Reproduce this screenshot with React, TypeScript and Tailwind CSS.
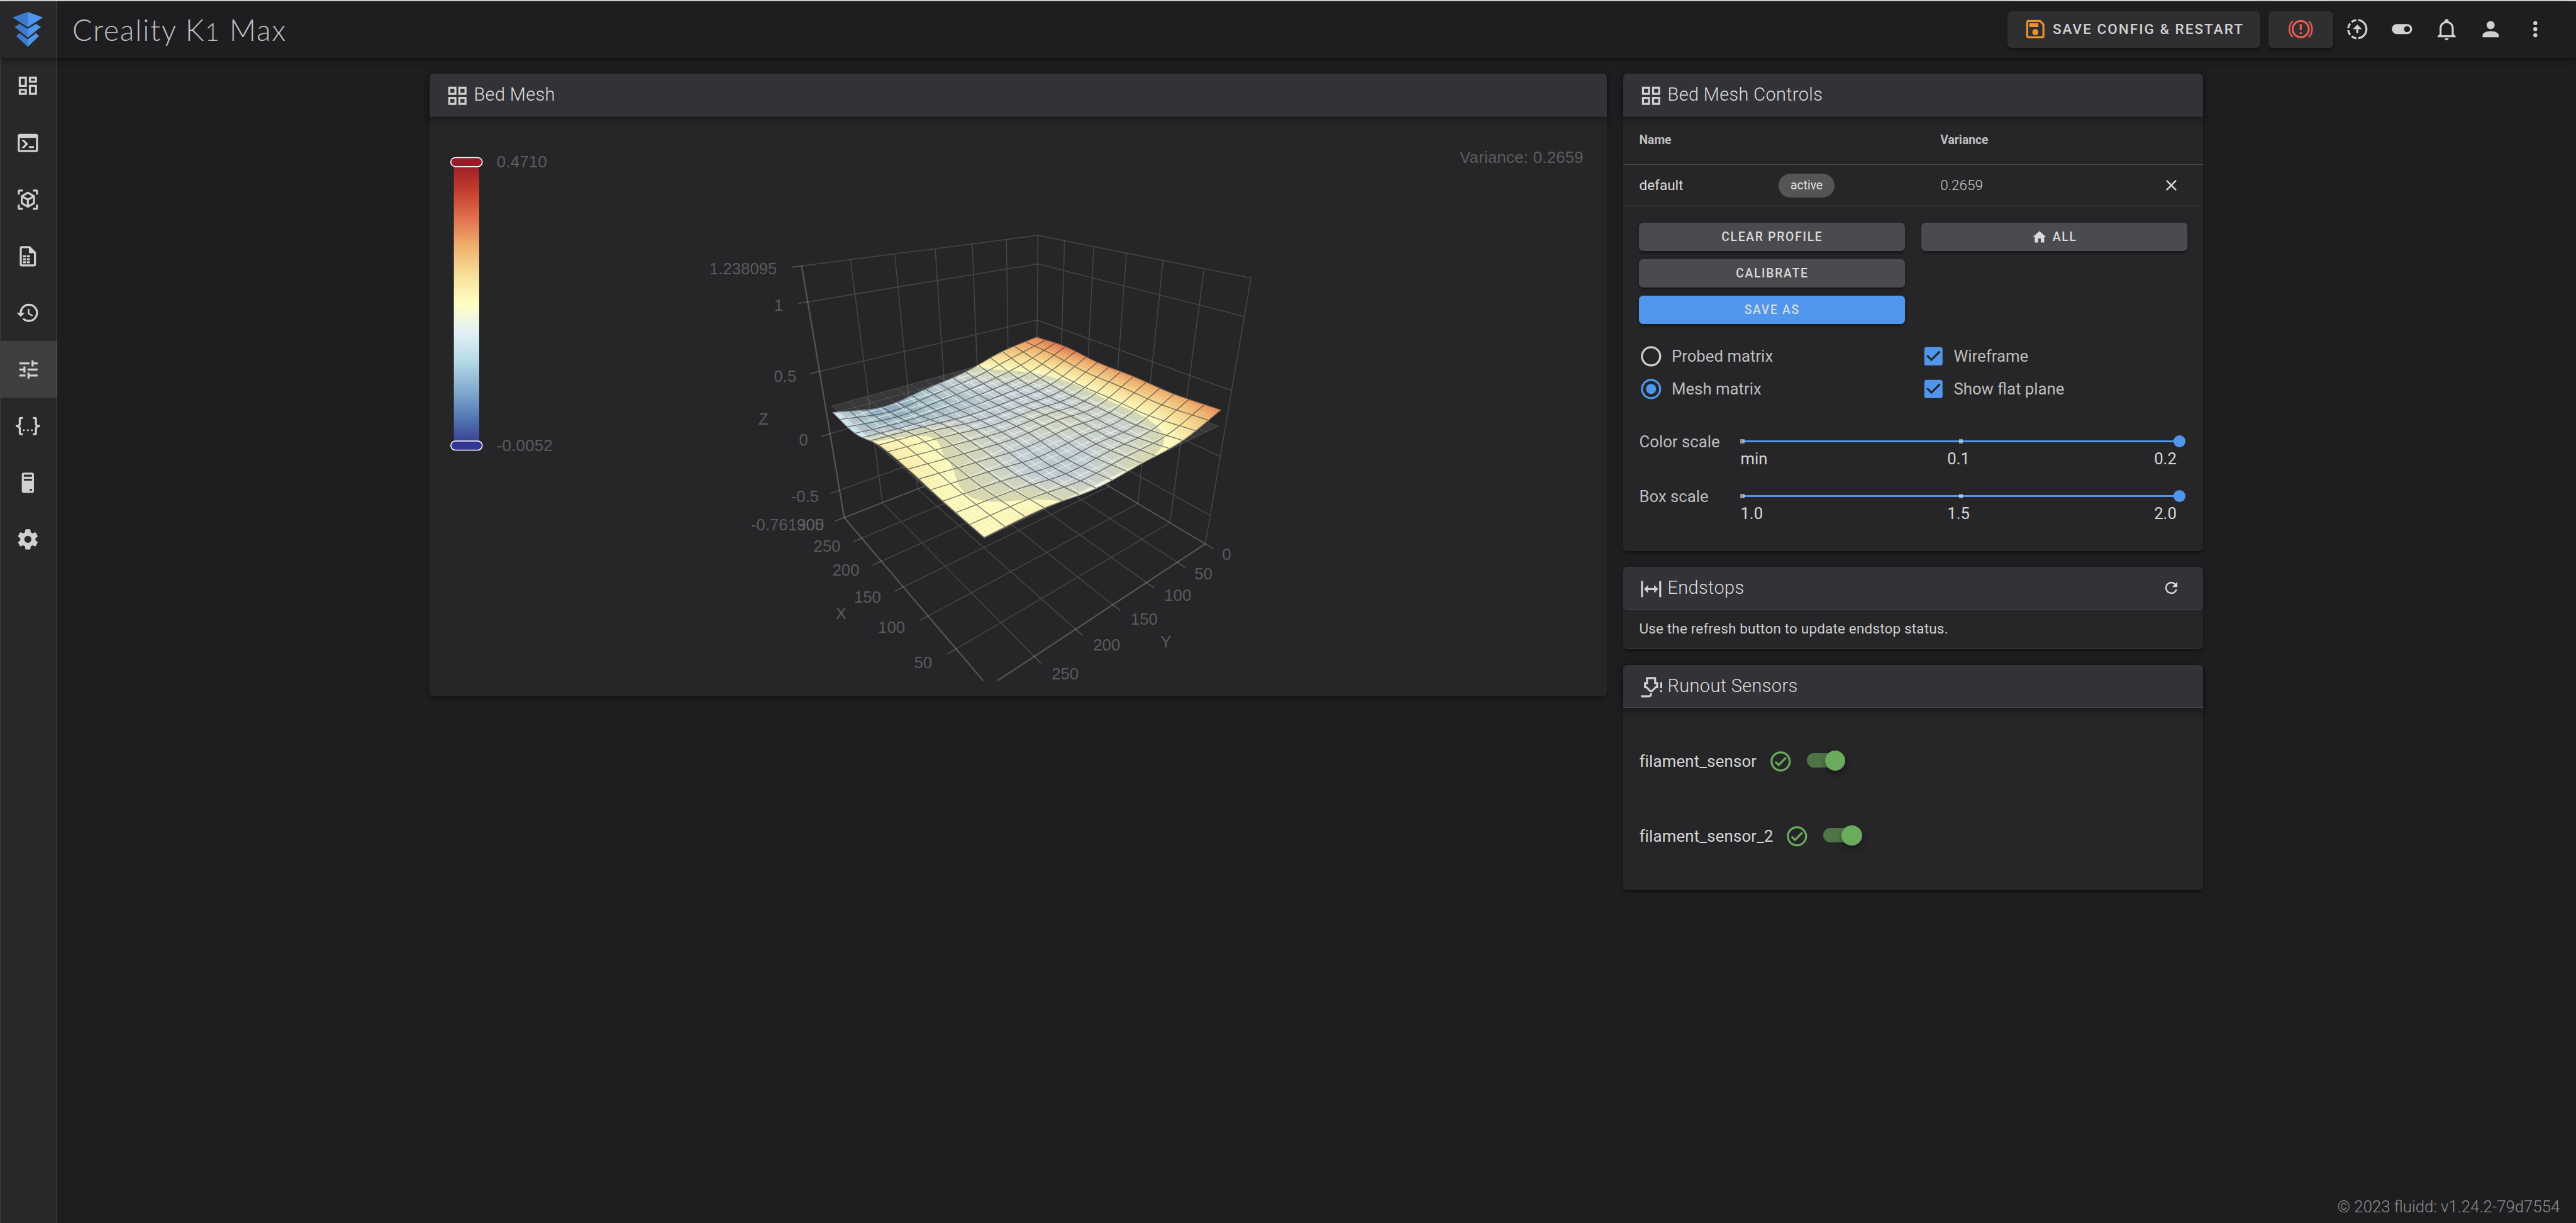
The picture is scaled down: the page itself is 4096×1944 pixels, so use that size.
import React from "react";

/* ------------------------------------------------------------------ icons */

const ICONS = {
  dashboard:
    "M19,5V7H15V5H19M9,5V11H5V5H9M19,13V19H15V13H19M9,17V19H5V17H9M21,3H13V9H21V3M11,3H3V13H11V3M21,11H13V21H21V11M11,15H3V21H11V15Z",
  console:
    "M20,19V7H4V19H20M20,3A2,2 0 0,1 22,5V19A2,2 0 0,1 20,21H4A2,2 0 0,1 2,19V5C2,3.89 2.9,3 4,3H20M13,17V15H18V17H13M9.58,13L5.57,9H8.4L11.7,12.3C12.09,12.69 12.09,13.33 11.7,13.72L8.42,17H5.59L9.58,13Z",
  cubeScan:
    "M17,22V20H20V17H22V20.5C22,20.89 21.84,21.24 21.54,21.54C21.24,21.84 20.89,22 20.5,22H17M7,22H3.5C3.11,22 2.76,21.84 2.46,21.54C2.16,21.24 2,20.89 2,20.5V17H4V20H7V22M17,2H20.5C20.89,2 21.24,2.16 21.54,2.46C21.84,2.76 22,3.11 22,3.5V7H20V4H17V2M7,2V4H4V7H2V3.5C2,3.11 2.16,2.76 2.46,2.46C2.76,2.16 3.11,2 3.5,2H7M13,17.25L17,14.95V10.36L13,12.66V17.25M12,10.92L16,8.63L12,6.28L8,8.63L12,10.92M7,14.95L11,17.25V12.66L7,10.36V14.95M18.23,7.59C18.73,7.91 19,8.34 19,8.91V15.23C19,15.8 18.73,16.23 18.23,16.55L12.75,19.73C12.25,20.05 11.75,20.05 11.25,19.73L5.77,16.55C5.27,16.23 5,15.8 5,15.23V8.91C5,8.34 5.27,7.91 5.77,7.59L11.25,4.41C11.5,4.28 11.75,4.22 12,4.22C12.25,4.22 12.5,4.28 12.75,4.41L18.23,7.59Z",
  fileTable:
    "M14,2H6A2,2 0 0,0 4,4V20A2,2 0 0,0 6,22H18A2,2 0 0,0 20,20V8L14,2M18,20H6V4H13V9H18V20M7,11H10V13H7V11M11,11H14V13H11V11M7,14H10V16H7V14M11,14H14V16H11V14M7,17H10V19H7V17M11,17H14V19H11V17Z",
  history:
    "M13.5,8H12V13L16.28,15.54L17,14.33L13.5,12.25V8M13,3A9,9 0 0,0 4,12H1L4.96,16.03L9,12H6A7,7 0 0,1 13,5A7,7 0 0,1 20,12A7,7 0 0,1 13,19C11.07,19 9.32,18.21 8.06,16.94L6.64,18.36C8.27,20 10.5,21 13,21A9,9 0 0,0 22,12A9,9 0 0,0 13,3",
  tune: "M3,17V19H9V17H3M3,5V7H13V5H3M13,21V19H21V17H13V15H11V21H13M7,9V11H3V13H7V15H9V9H7M21,13V11H11V13H21M15,9H17V7H21V5H17V3H15V9Z",
  json: "M5,3H7V5H5V10A2,2 0 0,1 3,12A2,2 0 0,1 5,14V19H7V21H5C3.93,20.73 3,20.1 3,19V15A2,2 0 0,0 1,13H0V11H1A2,2 0 0,0 3,9V5A2,2 0 0,1 5,3M19,3A2,2 0 0,1 21,5V9A2,2 0 0,0 23,11H24V13H23A2,2 0 0,0 21,15V19A2,2 0 0,1 19,21H17V19H19V14A2,2 0 0,1 21,12A2,2 0 0,1 19,10V5H17V3H19M12,15A1,1 0 0,1 13,16A1,1 0 0,1 12,17A1,1 0 0,1 11,16A1,1 0 0,1 12,15M8,15A1,1 0 0,1 9,16A1,1 0 0,1 8,17A1,1 0 0,1 7,16A1,1 0 0,1 8,15M16,15A1,1 0 0,1 17,16A1,1 0 0,1 16,17A1,1 0 0,1 15,16A1,1 0 0,1 16,15Z",
  tower:
    "M8,2H16A2,2 0 0,1 18,4V20A2,2 0 0,1 16,22H8A2,2 0 0,1 6,20V4A2,2 0 0,1 8,2M8,4V6H16V4H8M16,8H8V10H16V8M16,18H14V20H16V18Z",
  cog: "M12,15.5A3.5,3.5 0 0,1 8.5,12A3.5,3.5 0 0,1 12,8.5A3.5,3.5 0 0,1 15.5,12A3.5,3.5 0 0,1 12,15.5M19.43,12.97C19.47,12.65 19.5,12.33 19.5,12C19.5,11.67 19.47,11.34 19.43,11L21.54,9.37C21.73,9.22 21.78,8.95 21.66,8.73L19.66,5.27C19.54,5.05 19.27,4.96 19.05,5.05L16.56,6.05C16.04,5.66 15.5,5.32 14.87,5.07L14.5,2.42C14.46,2.18 14.25,2 14,2H10C9.75,2 9.54,2.18 9.5,2.42L9.13,5.07C8.5,5.32 7.96,5.66 7.44,6.05L4.95,5.05C4.73,4.96 4.46,5.05 4.34,5.27L2.34,8.73C2.21,8.95 2.27,9.22 2.46,9.37L4.57,11C4.53,11.34 4.5,11.67 4.5,12C4.5,12.33 4.53,12.65 4.57,12.97L2.46,14.63C2.27,14.78 2.21,15.05 2.34,15.27L4.34,18.73C4.46,18.95 4.73,19.03 4.95,18.95L7.44,17.94C7.96,18.34 8.5,18.68 9.13,18.93L9.5,21.58C9.54,21.82 9.75,22 10,22H14C14.25,22 14.46,21.82 14.5,21.58L14.87,18.93C15.5,18.67 16.04,18.34 16.56,17.94L19.05,18.95C19.27,19.03 19.54,18.95 19.66,18.73L21.66,15.27C21.78,15.05 21.73,14.78 21.54,14.63L19.43,12.97Z",
  save: "M17 3H5C3.89 3 3 3.9 3 5V19C3 20.1 3.89 21 5 21H19C20.1 21 21 20.1 21 19V7L17 3M19 19H5V5H16.17L19 7.83V19M12 12C10.34 12 9 13.34 9 15S10.34 18 12 18 15 16.66 15 15 13.66 12 12 12M6 6H15V10H6V6Z",
  brakeAlert:
    "M11,7H13V13H11V7M11,15H13V17H11V15M12,3A9,9 0 0,0 3,12A9,9 0 0,0 12,21A9,9 0 0,0 21,12A9,9 0 0,0 12,3M12,19C8.14,19 5,15.86 5,12C5,8.14 8.14,5 12,5C15.86,5 19,8.14 19,12C19,15.86 15.86,19 12,19M20.5,20.5C22.66,18.31 24,15.31 24,12C24,8.69 22.66,5.69 20.5,3.5L19.42,4.58C21.32,6.5 22.5,9.11 22.5,12C22.5,14.9 21.32,17.5 19.42,19.42L20.5,20.5M4.58,19.42C2.68,17.5 1.5,14.9 1.5,12C1.5,9.11 2.68,6.5 4.58,4.58L3.5,3.5C1.34,5.69 0,8.69 0,12C0,15.31 1.34,18.31 3.5,20.5L4.58,19.42Z",
  progressUpload:
    "M13,2.03V2.05L13,4.05C17.39,4.59 20.5,8.58 19.96,12.97C19.5,16.61 16.64,19.5 13,19.93V21.93C18.5,21.38 22.5,16.5 21.95,11C21.5,6.25 17.73,2.5 13,2.03M11,2.06C9.05,2.25 7.19,3 5.67,4.26L7.1,5.74C8.22,4.84 9.57,4.26 11,4.06V2.06M4.26,5.67C3,7.19 2.25,9.04 2.05,11H4.05C4.24,9.58 4.8,8.23 5.69,7.1L4.26,5.67M2.06,13C2.26,14.96 3.03,16.81 4.27,18.33L5.69,16.9C4.81,15.77 4.24,14.42 4.06,13H2.06M7.1,18.37L5.67,19.74C7.18,21 9.04,21.79 11,22V20C9.58,19.82 8.23,19.25 7.1,18.37M12,7.5L7.5,12H11V16H13V12H16.5L12,7.5Z",
  toggle:
    "M17,7H7A5,5 0 0,0 2,12A5,5 0 0,0 7,17H17A5,5 0 0,0 22,12A5,5 0 0,0 17,7M17,15A3,3 0 0,1 14,12A3,3 0 0,1 17,9A3,3 0 0,1 20,12A3,3 0 0,1 17,15Z",
  bell: "M10 21H14C14 22.1 13.1 23 12 23S10 22.1 10 21M21 19V20H3V19L5 17V11C5 7.9 7 5.2 10 4.3V4C10 2.9 10.9 2 12 2S14 2.9 14 4V4.3C17 5.2 19 7.9 19 11V17L21 19M17 11C17 8.2 14.8 6 12 6S7 8.2 7 11V18H17V11Z",
  account:
    "M12,4A4,4 0 0,1 16,8A4,4 0 0,1 12,12A4,4 0 0,1 8,8A4,4 0 0,1 12,4M12,14C16.42,14 20,15.79 20,18V20H4V18C4,15.79 7.58,14 12,14Z",
  dots: "M12,16A2,2 0 0,1 14,18A2,2 0 0,1 12,20A2,2 0 0,1 10,18A2,2 0 0,1 12,16M12,10A2,2 0 0,1 14,12A2,2 0 0,1 12,14A2,2 0 0,1 10,12A2,2 0 0,1 12,10M12,4A2,2 0 0,1 14,6A2,2 0 0,1 12,8A2,2 0 0,1 10,6A2,2 0 0,1 12,4Z",
  grid: "M3,11H11V3H3M5,5H9V9H5M13,21H21V13H13M15,15H19V19H15M3,21H11V13H3M5,15H9V19H5M13,3V11H21V3M19,9H15V5H19Z",
  close:
    "M19,6.41L17.59,5L12,10.59L6.41,5L5,6.41L10.59,12L5,17.59L6.41,19L12,13.41L17.59,19L19,17.59L13.41,12L19,6.41Z",
  home: "M10,20V14H14V20H19V12H22L12,3L2,12H5V20H10Z",
  radioOff:
    "M12,20A8,8 0 0,1 4,12A8,8 0 0,1 12,4A8,8 0 0,1 20,12A8,8 0 0,1 12,20M12,2A10,10 0 0,0 2,12A10,10 0 0,0 12,22A10,10 0 0,0 22,12A10,10 0 0,0 12,2Z",
  radioOn:
    "M12,20A8,8 0 0,1 4,12A8,8 0 0,1 12,4A8,8 0 0,1 20,12A8,8 0 0,1 12,20M12,2A10,10 0 0,0 2,12A10,10 0 0,0 12,22A10,10 0 0,0 22,12A10,10 0 0,0 12,2M12,7A5,5 0 0,0 7,12A5,5 0 0,0 12,17A5,5 0 0,0 17,12A5,5 0 0,0 12,7Z",
  checkbox:
    "M10,17L5,12L6.41,10.58L10,14.17L17.59,6.58L19,8M19,3H5C3.89,3 3,3.89 3,5V19A2,2 0 0,0 5,21H19A2,2 0 0,0 21,19V5C21,3.89 20.1,3 19,3Z",
  expandH:
    "M9,11H15V8L19,12L15,16V13H9V16L5,12L9,8V11M2,20V4H4V20H2M20,20V4H22V20H20Z",
  refresh:
    "M17.65,6.35C16.2,4.9 14.21,4 12,4A8,8 0 0,0 4,12A8,8 0 0,0 12,20C15.73,20 18.84,17.45 19.73,14H17.65C16.83,16.33 14.61,18 12,18A6,6 0 0,1 6,12A6,6 0 0,1 12,6C13.66,6 15.14,6.69 16.22,7.78L13,11H20V4L17.65,6.35Z",
  nozzle:
    "M7,2H17V7H19V13H17L13,17H11L7,13H5V7H7V2M9,4V9H7V11H7.8L12,15.2L16.2,11H17V9H15V4H9M11,18H13C13,20.5 12,22 10,22H2V20H10C10.7,20 11,19.3 11,18M21,7H23V13H21V7M21,15H23V17H21V15Z",
  checkCircle:
    "M12 2C6.5 2 2 6.5 2 12S6.5 22 12 22 22 17.5 22 12 17.5 2 12 2M12 20C7.59 20 4 16.41 4 12S7.59 4 12 4 20 7.59 20 12 16.41 20 12 20M16.59 7.58L10 14.17L7.41 11.59L6 13L10 17L18 9L16.59 7.58Z",
} as const;

type IconName = keyof typeof ICONS;

function Icon({ name, className = "size-6" }: { name: IconName; className?: string }) {
  return (
    <svg viewBox="0 0 24 24" className={`shrink-0 fill-current ${className}`} fillRule="evenodd">
      <path d={ICONS[name]} />
    </svg>
  );
}

function Logo() {
  return (
    <svg viewBox="0 0 30 34.5" className="h-[34.5px] w-[30px]">
      <path fill="#3c7acb" d="M15 0L0 5.4L15 15.1Z" />
      <path fill="#4e96ec" d="M15 0L30 5.4L15 15.1Z" />
      <path fill="#3c7acb" d="M15 16.6L6.9 11.8L2 14.7L15 25.3Z" />
      <path fill="#4e96ec" d="M15 16.6L23.1 11.8L28 14.7L15 25.3Z" />
      <path fill="#3c7acb" d="M15 27L6.9 20.9L3.5 23.7L15 34.5Z" />
      <path fill="#4e96ec" d="M15 27L23.1 20.9L26.1 23.7L15 34.5Z" />
    </svg>
  );
}

/* --------------------------------------------------------- mesh projection */

type Pt = [number, number];

// a runs from the back corner to the left, b from the back corner to the
// right, z from the floor to the top; all three span 0..1.
function project(a: number, b: number, z: number): Pt {
  const d = 1 - 0.1948 * a - 0.245 * b - 0.153 * z;
  return [
    (1022.9 - 351.9 * a - 124.4 * b - 154.9 * z) / d + 0.8,
    (437.1 - 25.6 * a - 31.6 * b - 240.3 * z) / d,
  ];
}

const Z_MIN = -0.761905;
const toZ = (v: number) => (v - Z_MIN) / 2;
const PLANE = 0.2329;
const EDGE = 5 / 300;

// Probed heights: rows go from Y = 5 to 295, columns from X = 295 to 5.
const PROBED = [
  [0.355, 0.372, 0.345, 0.346, 0.335, 0.355],
  [0.3045, 0.235, 0.2, 0.205, 0.208, 0.254],
  [0.2095, 0.182, 0.186, 0.212, 0.194, 0.229],
  [0.156, 0.155, 0.182, 0.195, 0.17, 0.208],
  [0.109, 0.142, 0.222, 0.222, 0.214, 0.243],
  [0.18, 0.169, 0.247, 0.257, 0.243, 0.24],
];

function spline(v: number[], t: number): number {
  const n = v.length - 1;
  const x = Math.min(Math.max(t * n, 0), n - 1e-9);
  const i = Math.floor(x);
  const f = x - i;
  const p1 = v[i];
  const p2 = v[i + 1];
  const p0 = i > 0 ? v[i - 1] : 2 * p1 - p2;
  const p3 = i + 2 <= n ? v[i + 2] : 2 * p2 - p1;
  return (
    p1 +
    0.5 * f * (p2 - p0 + f * (2 * p0 - 5 * p1 + 4 * p2 - p3 + f * (3 * (p1 - p2) + p3 - p0)))
  );
}

function height(u: number, v: number): number {
  return spline(PROBED.map((row) => spline(row, v)), u);
}

const SCALE: [number, number, number][] = [
  [53, 57, 144],
  [84, 121, 181],
  [134, 173, 209],
  [182, 218, 230],
  [227, 240, 247],
  [255, 254, 196],
  [248, 224, 152],
  [240, 178, 112],
  [226, 114, 78],
  [196, 60, 46],
  [150, 28, 42],
];

function colorOf(v: number): string {
  const t = Math.min(Math.max((v + 0.0052) / 0.4762, 0), 0.99999) * 10;
  const i = Math.floor(t);
  const f = t - i;
  const c = SCALE[i].map((x, k) => Math.round(x + (SCALE[i + 1][k] - x) * f));
  return `rgb(${c.join(",")})`;
}

const fmt = (p: Pt) => `${p[0].toFixed(2)} ${p[1].toFixed(2)}`;
const toPath = (pts: Pt[], close = false) => (pts.length ? `M${pts.map(fmt).join("L")}${close ? "Z" : ""}` : "");

const N = 60;
const lerpPos = (u: number) => EDGE + u * (1 - 2 * EDGE);
const H = Array.from({ length: N + 1 }, (_, j) =>
  Array.from({ length: N + 1 }, (_, i) => height(j / N, i / N)),
);
const surf = (j: number, i: number): Pt => project(lerpPos(j / N), lerpPos(i / N), toZ(H[j][i]));
const flat = (u: number, v: number): Pt => project(lerpPos(u), lerpPos(v), toZ(PLANE));

function buildCells() {
  const cells: { d: string; c: string }[] = [];
  for (let s = 0; s <= 2 * (N - 1); s++) {
    for (let j = Math.max(0, s - N + 1); j <= Math.min(s, N - 1); j++) {
      const i = s - j;
      cells.push({
        d: toPath([surf(j, i), surf(j, i + 1), surf(j + 1, i + 1), surf(j + 1, i)], true),
        c: colorOf((H[j][i] + H[j + 1][i] + H[j][i + 1] + H[j + 1][i + 1]) / 4),
      });
    }
  }
  return cells;
}

function buildWire() {
  let d = "";
  for (let k = 0; k <= 15; k++) {
    const g = k * (N / 15);
    d += toPath(Array.from({ length: N + 1 }, (_, i) => surf(g, i)));
    d += toPath(Array.from({ length: N + 1 }, (_, j) => surf(j, g)));
  }
  return d;
}

// Part of the flat plane that lies over the surface, clipped per cell.
function buildAbove() {
  let d = "";
  for (let j = 0; j < N; j++) {
    for (let i = 0; i < N; i++) {
      const q = [
        [j, i],
        [j, i + 1],
        [j + 1, i + 1],
        [j + 1, i],
      ];
      const out: Pt[] = [];
      for (let k = 0; k < 4; k++) {
        const [j0, i0] = q[k];
        const [j1, i1] = q[(k + 1) % 4];
        const f0 = PLANE - H[j0][i0];
        const f1 = PLANE - H[j1][i1];
        if (f0 >= 0) out.push(flat(j0 / N, i0 / N));
        if (f0 >= 0 !== f1 >= 0) {
          const t = f0 / (f0 - f1);
          out.push(flat((j0 + (j1 - j0) * t) / N, (i0 + (i1 - i0) * t) / N));
        }
      }
      if (out.length > 2) d += toPath(out, true);
    }
  }
  return d;
}

function buildFlatGrid() {
  let d = "";
  for (let k = 0; k <= 15; k++) {
    d += toPath([flat(k / 15, 0), flat(k / 15, 1)]);
    d += toPath([flat(0, k / 15), flat(1, k / 15)]);
  }
  return d;
}

const seq = Array.from({ length: N + 1 }, (_, i) => i);
const OUTLINE = toPath(
  [
    ...seq.map((i) => surf(0, i)),
    ...seq.map((j) => surf(j, N)),
    ...seq.map((i) => surf(N, N - i)),
    ...seq.map((j) => surf(N - j, 0)),
  ],
  true,
);
const CELLS = buildCells();
const WIRE = buildWire();
const ABOVE = buildAbove();
const FLAT_GRID = buildFlatGrid();
const FLAT = toPath([flat(0, 0), flat(0, 1), flat(1, 1), flat(1, 0)], true);

const Z_TICKS = [toZ(1), toZ(0.5), toZ(0), toZ(-0.5)];
const XY_TICKS = [50, 100, 150, 200, 250].map((v) => v / 300);

const GRID_LINES = [
  ...Z_TICKS.map((z) => toPath([project(1, 0, z), project(0, 0, z), project(0, 1, z)])),
  ...XY_TICKS.map((t) => toPath([project(t, 0, 1), project(t, 0, 0), project(t, 1, 0)])),
  ...XY_TICKS.map((t) => toPath([project(0, t, 1), project(0, t, 0), project(1, t, 0)])),
  toPath([project(1, 0, 1), project(0, 0, 1), project(0, 1, 1), project(0, 1, 0)]),
].join("");

function tick(from: Pt, toward: Pt): string {
  const dx = toward[0] - from[0];
  const dy = toward[1] - from[1];
  const l = Math.hypot(dx, dy);
  return toPath([from, [from[0] + (dx / l) * 9.5, from[1] + (dy / l) * 9.5]]);
}

const TICKS = [
  ...[1, ...Z_TICKS, 0].map((z) => tick(project(1, 0, z), project(1.05, 0, z))),
  ...XY_TICKS.map((b) => tick(project(1, b, 0), project(1.05, b, 0))),
  ...[0, ...XY_TICKS].map((a) => tick(project(a, 1, 0), project(a, 1.05, 0))),
].join("");

const LABELS: [string, number, number][] = [
  ["1.238095", 734.3, 264.8],
  ["1", 769.2, 301],
  ["0.5", 775.8, 371.5],
  ["Z", 754.3, 413.7],
  ["0", 794, 434.1],
  ["-0.5", 795.4, 490.2],
  ["-0.761905", 778, 517.7],
  ["300", 800.9, 517.7],
  ["250", 817.2, 539],
  ["200", 835.8, 562.7],
  ["150", 857.2, 589.4],
  ["100", 880.9, 619.3],
  ["50", 912.1, 653.8],
  ["X", 831, 605.6],
  ["0", 1212, 547.4],
  ["50", 1189.1, 566.3],
  ["100", 1163.7, 587.9],
  ["150", 1130.6, 611.3],
  ["200", 1093.5, 636.7],
  ["250", 1052.4, 665.5],
  ["Y", 1152, 633.7],
];

function MeshChart() {
  return (
    <svg
      viewBox="440 131 1131.33 541"
      className="h-[541px] w-full overflow-visible font-['Liberation_Sans',Arial,sans-serif] text-base"
    >
      <defs>
        <linearGradient id="legend" x1="0" y1="1" x2="0" y2="0">
          {SCALE.map((c, i) => (
            <stop key={i} offset={i / 10} stopColor={`rgb(${c.join(",")})`} />
          ))}
        </linearGradient>
        <clipPath id="canvas">
          <rect x="440" y="131" width="1131.33" height="541" />
        </clipPath>
        <clipPath id="surface">
          <path d={OUTLINE} />
        </clipPath>
        <clipPath id="above">
          <path d={ABOVE} />
        </clipPath>
      </defs>

      {/* box */}
      <g fill="none" stroke="#ffffff" clipPath="url(#canvas)">
        <path d={GRID_LINES} strokeOpacity={0.14} strokeWidth={1} />
        <path d={toPath([project(0, 0, 1), project(0, 0, 0)])} strokeOpacity={0.14} strokeWidth={1} />
        <path
          d={toPath([project(1, 0, 0), project(0, 0, 0), project(0, 1, 0)])}
          strokeOpacity={0.25}
          strokeWidth={1}
        />
        <path
          d={toPath([project(1, 0, 1), project(1, 0, 0), project(1, 1, 0), project(0, 1, 0)])}
          strokeOpacity={0.22}
          strokeWidth={1.4}
        />
        <path d={TICKS} strokeOpacity={0.2} strokeWidth={1} />
      </g>

      {/* flat plane behind the surface */}
      <path d={FLAT} fill="#737376" fillOpacity={0.24} />
      <path d={FLAT_GRID} fill="none" stroke="#ffffff" strokeOpacity={0.15} strokeWidth={0.6} />

      {/* surface */}
      {CELLS.map((c, i) => (
        <path key={i} d={c.d} fill={c.c} stroke={c.c} strokeWidth={0.4} />
      ))}

      {/* flat plane over the surface */}
      <g clipPath="url(#surface)">
        <path d={ABOVE} fill="#737376" fillOpacity={0.26} />
        <g clipPath="url(#above)">
          <path d={FLAT_GRID} fill="none" stroke="#f6fff4" strokeOpacity={0.65} strokeWidth={0.8} />
        </g>
      </g>
      <path d={WIRE} fill="none" stroke="#3c3c3c" strokeOpacity={0.65} strokeWidth={0.9} clipPath="url(#surface)" />

      {/* axis labels */}
      <g fill="#606063" textAnchor="middle">
        {LABELS.map(([t, x, y], i) => (
          <text key={i} x={x} y={y + 5.7} fillOpacity={0.92}>
            {t}
          </text>
        ))}
      </g>

      {/* legend */}
      <rect x="448.5" y="160" width="25" height="280" fill="url(#legend)" />
      <rect x="445.5" y="155.5" width="31" height="9" rx="4.5" fill="#961c2a" stroke="#fff" />
      <rect x="445.5" y="435.5" width="31" height="9" rx="4.5" fill="#323791" stroke="#fff" />
      <g fill="#5c5c5f" letterSpacing={0.16}>
        <text x="490.8" y="165.2">
          0.4710
        </text>
        <text x="490.8" y="445.2">
          -0.0052
        </text>
        <text x="1564.6" y="160.6" textAnchor="end">
          Variance: 0.2659
        </text>
      </g>
    </svg>
  );
}

/* ------------------------------------------------------------- components */

function Card({
  icon,
  title,
  action,
  flatHeader,
  className = "",
  children,
}: {
  icon: IconName;
  title: string;
  action?: React.ReactNode;
  flatHeader?: boolean;
  className?: string;
  children: React.ReactNode;
}) {
  return (
    <section
      className={`flex flex-col rounded bg-[#262628] shadow-[0_3px_1px_-2px_rgba(0,0,0,.2),0_2px_2px_0_rgba(0,0,0,.14),0_1px_5px_0_rgba(0,0,0,.12)] ${className}`}
    >
      <header
        className={`flex h-[42px] shrink-0 items-center border-b border-[#4a4a4e] bg-[#333236] px-4 ${
          flatHeader
            ? "rounded"
            : "rounded-t shadow-[0_2px_4px_-1px_rgba(0,0,0,.2),0_4px_5px_0_rgba(0,0,0,.14),0_1px_10px_0_rgba(0,0,0,.12)]"
        }`}
      >
        <Icon name={icon} className="mt-[2px] size-6 text-[#d0d0d1]" />
        <h2 className="ml-1 flex-1 text-[18px]/[24px] font-light tracking-[0.22px] text-[#dcdcdd]">{title}</h2>
        {action}
      </header>
      {children}
    </section>
  );
}

function Btn({ primary, children }: { primary?: boolean; children: React.ReactNode }) {
  return (
    <button
      className={`flex h-7 w-full items-center justify-center rounded text-xs font-medium tracking-[1.07px] uppercase text-[#dbdbdc] shadow-[0_3px_1px_-2px_rgba(0,0,0,.2),0_2px_2px_0_rgba(0,0,0,.14),0_1px_5px_0_rgba(0,0,0,.12)] ${
        primary ? "bg-[#4f96ec]" : "bg-[#4b4a4f]"
      }`}
    >
      {children}
    </button>
  );
}

function Option({ icon, on, label }: { icon: IconName; on?: boolean; label: string }) {
  return (
    <label className="flex h-8 items-center gap-2 text-base text-[#bdbdbe]">
      <Icon name={icon} className={on ? "size-6 text-[#4f96ec]" : "size-6 text-[#cfcfd0]"} />
      <span>{label}</span>
    </label>
  );
}

function Slider({ label, marks }: { label: string; marks: string[] }) {
  return (
    <div className="flex h-[54px]">
      <span className="-mt-[0.5px] w-[100px] shrink-0 text-base/[20px] text-[#bdbdbe]">{label}</span>
      <div className="w-[433.7px]">
        <div className="relative mt-[3px] flex h-3 items-center">
          <div className="ml-[2px] h-[2px] flex-1 bg-[#4f96ec]" />
          <div className="absolute top-1 left-0 size-1 bg-white/50" />
          <div className="absolute top-1 left-[215.8px] size-1 bg-white/50" />
          <div className="absolute top-0 -right-[6px] size-3 rounded-full bg-[#4f96ec]" />
        </div>
        <div className="mt-[1px] mr-[2px] flex justify-between text-base/[20px] text-[#d6d6d7]">
          {marks.map((m) => (
            <span key={m} className="w-[23px] whitespace-nowrap">
              {m}
            </span>
          ))}
        </div>
      </div>
    </div>
  );
}

function Sensor({ name }: { name: string }) {
  return (
    <div className="flex h-[74px] items-center">
      <span className="text-base tracking-[0.12px] text-[#d6d6d7]">{name}</span>
      <Icon name="checkCircle" className="ml-[11.6px] size-6 text-[#6aab5e]" />
      <div className="relative -mt-[2px] ml-[14px] h-[14px] w-9 rounded-full bg-[#4f7547]">
        <div className="absolute -top-[3px] right-[-2px] size-5 rounded-full bg-[#6aab5e] shadow-[0_2px_4px_-1px_rgba(0,0,0,.2),0_4px_5px_0_rgba(0,0,0,.14),0_1px_10px_0_rgba(0,0,0,.12)]" />
      </div>
    </div>
  );
}

const NAV: IconName[] = ["dashboard", "console", "cubeScan", "fileTable", "history", "tune", "json", "tower", "cog"];
const ACTIONS: IconName[] = ["progressUpload", "toggle", "bell", "account", "dots"];

export default function App() {
  return (
    <div className="flex h-[1208px] w-[2545px] flex-col overflow-hidden bg-[#1e1e20] font-['Roboto',sans-serif] text-[#d0d0d1] [zoom:1.60943]">
      <div className="h-px shrink-0 bg-[#d9dbdd]" />
      <header className="z-10 flex h-14 shrink-0 bg-[#1e1e20] shadow-[0_2px_4px_-1px_rgba(0,0,0,.2),0_4px_5px_0_rgba(0,0,0,.14),0_1px_10px_0_rgba(0,0,0,.12)]">
        <div className="flex w-14 shrink-0 items-center justify-center border-r border-[#434346] bg-[#28282a]">
          <Logo />
        </div>
        <h1 className="flex flex-1 items-center pl-[15.5px] font-['Lato',sans-serif] text-[29px] font-light tracking-[1.02px] text-[#bfbfc0]">
          <span>
            Creality K<span className="text-[.84em]">1</span> Max
          </span>
        </h1>
        <div className="flex items-center pr-[18px]">
          <button className="flex h-9 w-[250px] items-center rounded bg-[#2f2f31] pl-4 text-sm font-medium tracking-[1.25px] whitespace-nowrap uppercase text-[#d0d0d1] shadow-[0_3px_1px_-2px_rgba(0,0,0,.2),0_2px_2px_0_rgba(0,0,0,.14),0_1px_5px_0_rgba(0,0,0,.12)]">
            <Icon name="save" className="size-6 text-[#e99335]" />
            <span className="ml-[5px]">Save Config &amp; Restart</span>
          </button>
          <button className="ml-2 flex h-9 w-16 items-center justify-center rounded bg-[#2f2f31] shadow-[0_3px_1px_-2px_rgba(0,0,0,.2),0_2px_2px_0_rgba(0,0,0,.14),0_1px_5px_0_rgba(0,0,0,.12)]">
            <Icon name="brakeAlert" className="size-6 text-[#e65b54]" />
          </button>
          <div className="ml-[2px] flex">
            {ACTIONS.map((a) => (
              <span key={a} className="flex size-11 items-center justify-center">
                <Icon name={a} />
              </span>
            ))}
          </div>
        </div>
      </header>

      <div className="flex min-h-0 flex-1">
        <nav className="flex w-14 shrink-0 flex-col border-r border-[#434346] bg-[#28282a] shadow-[inset_0.6px_0_0_#3e3e42]">
          {NAV.map((n) => (
            <a
              key={n}
              className={`flex h-14 items-center justify-center ${
                n === "tune" ? "-mr-px border-r border-[#565659] bg-[#3f3f41]" : ""
              }`}
            >
              <Icon name={n} />
            </a>
          ))}
        </nav>

        <div className="flex flex-1 flex-col">
          <main className="mx-auto flex w-[1752.67px] flex-1 items-start gap-4 pt-4">
            <Card icon="grid" title="Bed Mesh" className="w-[1163.33px] shrink-0">
              <div className="p-4">
                <MeshChart />
              </div>
            </Card>

            <div className="flex flex-1 flex-col gap-4">
              <Card icon="grid" title="Bed Mesh Controls" className="h-[471px]">
                <div className="flex h-12 shrink-0 items-center border-b border-[#434346] px-4 pb-px text-xs font-bold text-[#bfbfc0]">
                  <span className="w-[297.5px]">Name</span>
                  <span>Variance</span>
                </div>
                <div className="flex h-[41px] shrink-0 items-center border-b border-[#434346] px-4 text-sm">
                  <span className="w-[137.5px] text-[#dcdcdd]">default</span>
                  <span className="flex w-40 shrink-0">
                    <span className="flex h-6 items-center rounded-full bg-[#555556] px-3 text-xs text-[#e2e2e2]">
                      active
                    </span>
                  </span>
                  <span className="flex-1 font-light text-[#c8c8c9]">0.2659</span>
                  <Icon name="close" className="mr-[6.5px] size-[18px] text-[#dcdcdd]" />
                </div>
                <div className="grid grid-cols-2 gap-4 px-4 pt-4">
                  <div className="flex flex-col gap-2">
                    <Btn>Clear Profile</Btn>
                    <Btn>Calibrate</Btn>
                    <Btn primary>Save As</Btn>
                  </div>
                  <div>
                    <Btn>
                      <Icon name="home" className="mr-[5px] size-4" />
                      All
                    </Btn>
                  </div>
                </div>
                <div className="grid grid-cols-2 gap-4 px-4 pt-4">
                  <div>
                    <Option icon="radioOff" label="Probed matrix" />
                    <Option icon="radioOn" on label="Mesh matrix" />
                  </div>
                  <div>
                    <Option icon="checkbox" on label="Wireframe" />
                    <Option icon="checkbox" on label="Show flat plane" />
                  </div>
                </div>
                <div className="px-4 pt-[27px]">
                  <Slider label="Color scale" marks={["min", "0.1", "0.2"]} />
                  <Slider label="Box scale" marks={["1.0", "1.5", "2.0"]} />
                </div>
              </Card>

              <Card
                icon="expandH"
                title="Endstops"
                flatHeader
                className="h-[81px] overflow-hidden"
                action={<Icon name="refresh" className="mr-[6.5px] size-[18px] text-[#dcdcdd]" />}
              >
                <p className="flex flex-1 items-center border-b border-[#434346] px-4 pt-px text-sm tracking-[0.1px] text-[#cfcfd0]">
                  Use the refresh button to update endstop status.
                </p>
              </Card>

              <Card icon="nozzle" title="Runout Sensors" className="h-[222px]">
                <div className="px-4 pt-4">
                  <Sensor name="filament_sensor" />
                  <Sensor name="filament_sensor_2" />
                </div>
              </Card>
            </div>
          </main>

          <footer className="flex h-[26.5px] justify-end pr-4 text-base/[20px] font-light text-[#8f8f90]">
            © 2023 fluidd: v1.24.2-79d7554
          </footer>
        </div>
      </div>
    </div>
  );
}
